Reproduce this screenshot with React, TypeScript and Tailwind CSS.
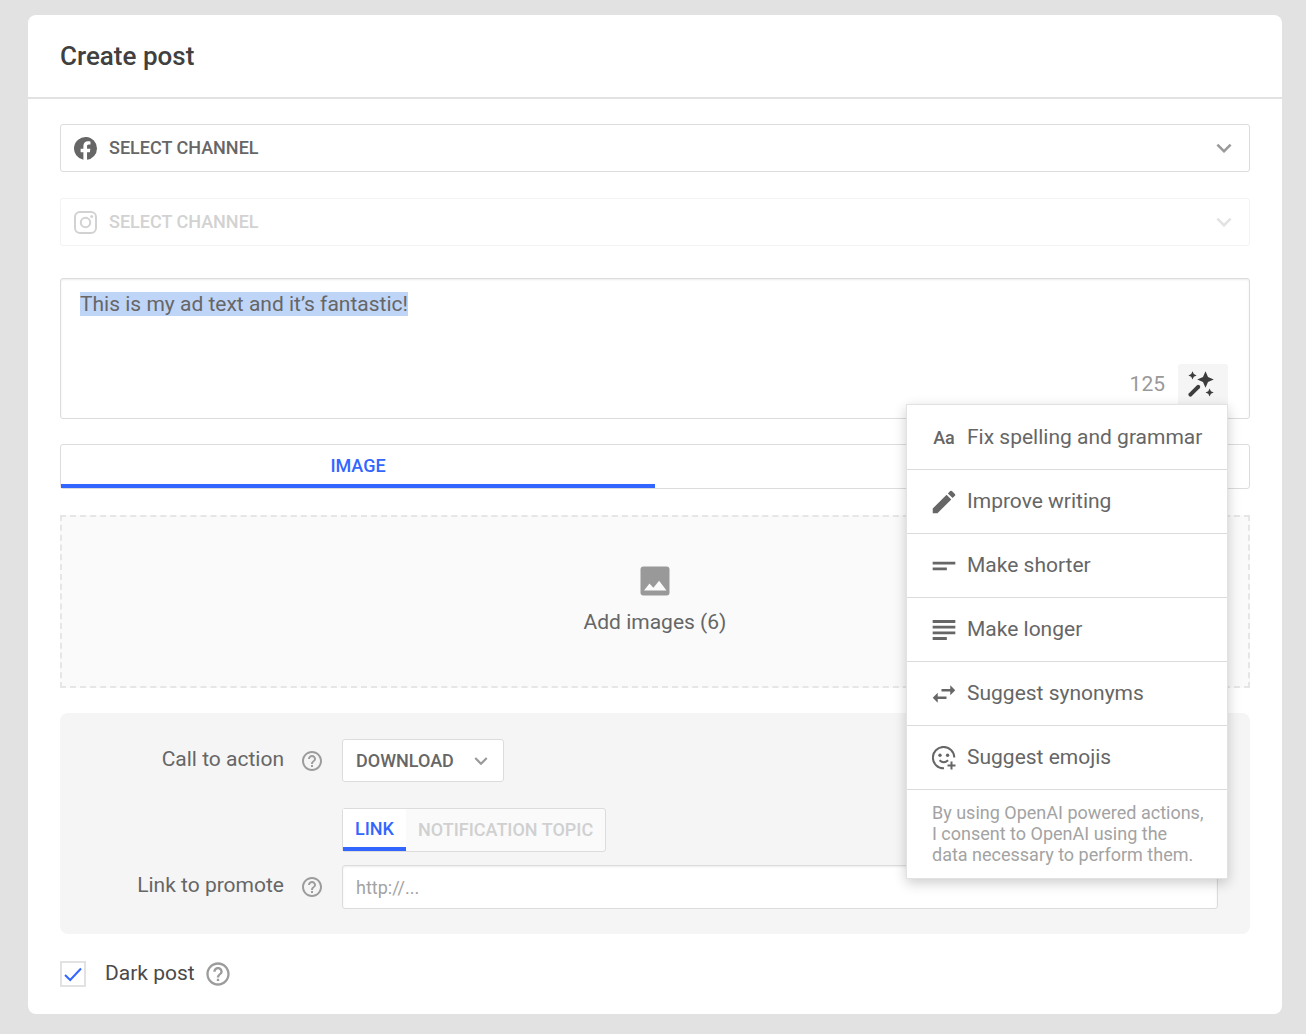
import { useEffect, useRef, useState, type ReactNode } from "react";
import {
  MdEdit,
  MdHelpOutline,
  MdKeyboardArrowDown,
  MdShortText,
  MdSubject,
  MdSwapHoriz,
} from "react-icons/md";

function FacebookIcon() {
  return (
    <svg width="23" height="23" viewBox="0 0 24 24" className="shrink-0">
      <path
        fill="#666666"
        d="M24 12a12 12 0 1 0-14.2 11.8v-8H6.9V12.200h2.900V9.500c0-3.300 1.900-5.100 4.800-5.100 1.100 0 2.300.2 2.600.3v3.100h-1.700c-1.600 0-1.900.9-1.900 1.900v2.500h3.500l-.6 3.600h-2.900v8A12 12 0 0 0 24 12z"
      />
    </svg>
  );
}

function InstagramIcon() {
  return (
    <svg
      width="23"
      height="23"
      viewBox="0 0 23 23"
      fill="none"
      stroke="#d2d2d2"
      strokeWidth="2"
      className="shrink-0"
    >
      <rect x="1" y="1" width="21" height="21" rx="5" />
      <circle cx="11.500" cy="11.500" r="4.700" />
      <circle cx="17.700" cy="5.500" r="1.500" fill="#d2d2d2" stroke="none" />
    </svg>
  );
}

function WandIcon() {
  return (
    <svg width="28" height="28" viewBox="0 0 28 28" fill="#3c3c3c">
      <path d="M18.500 1.200l2.500 5.800 5.800 2.500-5.800 2.500-2.500 5.800-2.500-5.800-5.800-2.500 5.800-2.500z" />
      <path d="M5.500 1.300l1.300 2.800 2.800 1.300-2.800 1.300-1.300 2.800-1.300-2.800-2.800-1.300 2.800-1.300z" />
      <path d="M22.600 18.400l1.300 2.800 2.800 1.300-2.800 1.300-1.300 2.800-1.300-2.800-2.800-1.300 2.800-1.300z" />
      <path
        d="M3.400 24.600l7.800-7.800"
        stroke="#3c3c3c"
        strokeWidth="4"
        strokeLinecap="round"
      />
    </svg>
  );
}

function ImageIcon() {
  return (
    <svg width="30" height="30" viewBox="0 0 30 30">
      <rect x="0.500" y="0.500" width="29" height="29" rx="3" fill="#999999" />
      <path
        d="M4 24.500l5.500-7 3.900 4.200 5.700-7 7.400 9.800z"
        fill="#fafafa"
      />
    </svg>
  );
}

function EmojiIcon() {
  return (
    <svg width="24" height="24" viewBox="0 0 24 24" fill="none" stroke="#666666">
      <path
        d="M22.300 11.500A10.700 10.700 0 1 0 12 22.300"
        strokeWidth="2"
      />
      <circle cx="8" cy="9.200" r="1.700" fill="#666666" stroke="none" />
      <circle cx="15.600" cy="9.200" r="1.700" fill="#666666" stroke="none" />
      <path d="M7.500 14.300q4.300 3.800 8.600 0" strokeWidth="2" />
      <path d="M19.500 15.500v8M15.500 19.500h8" strokeWidth="2" />
    </svg>
  );
}

function HelpButton({ label, size }: { label: string; size: number }) {
  return (
    <button type="button" aria-label={label} className="shrink-0 text-[#9c9c9c]">
      <MdHelpOutline size={size} />
    </button>
  );
}

const actions: { label: string; icon: ReactNode }[] = [
  {
    label: "Fix spelling and grammar",
    icon: <span className="text-[18px] font-medium">Aa</span>,
  },
  { label: "Improve writing", icon: <MdEdit size={30} className="shrink-0" /> },
  { label: "Make shorter", icon: <MdShortText size={34} className="shrink-0" /> },
  { label: "Make longer", icon: <MdSubject size={34} className="shrink-0" /> },
  { label: "Suggest synonyms", icon: <MdSwapHoriz size={30} className="shrink-0" /> },
  { label: "Suggest emojis", icon: <EmojiIcon /> },
];

export default function App() {
  const textRef = useRef<HTMLTextAreaElement>(null);
  const [text, setText] = useState("This is my ad text and it’s fantastic!");
  const [link, setLink] = useState("");
  const [darkPost, setDarkPost] = useState(true);
  const [menuOpen, setMenuOpen] = useState(true);

  useEffect(() => {
    textRef.current?.focus();
    textRef.current?.select();
  }, []);

  return (
    <div className="min-h-screen bg-[#e2e2e2] pt-[15px] pr-6 pb-5 pl-7 font-[Roboto,sans-serif] text-[#666666]">
      <main className="rounded-lg bg-white">
        <header className="border-b-2 border-[#e2e2e2] px-8 py-6">
          <h1 className="text-[26px] leading-[34px] font-medium text-[#404040]">
            Create post
          </h1>
        </header>

        <form className="px-8 pt-[25px] pb-[27px]">
          <div className="flex h-12 items-center rounded-[3px] border border-[#dcdcdc] px-[13px]">
            <FacebookIcon />
            <select
              aria-label="Facebook channel"
              className="ml-3 flex-1 appearance-none text-[18px] leading-6 font-medium outline-none"
            >
              <option>SELECT CHANNEL</option>
            </select>
            <MdKeyboardArrowDown size={30} className="-mr-[3px] text-[#999999]" />
          </div>

          <div className="mt-[26px] flex h-12 items-center rounded-[3px] border border-[#f3f3f3] px-[13px]">
            <InstagramIcon />
            <select
              aria-label="Instagram channel"
              disabled
              className="ml-3 flex-1 appearance-none text-[18px] leading-6 font-medium text-[#d2d2d2] opacity-100 outline-none"
            >
              <option>SELECT CHANNEL</option>
            </select>
            <MdKeyboardArrowDown size={30} className="-mr-[3px] text-[#e2e2e2]" />
          </div>

          <div className="relative mt-8">
            <textarea
              ref={textRef}
              aria-label="Post text"
              value={text}
              onChange={(e) => setText(e.target.value)}
              className="block h-[141px] w-full resize-none rounded-[3px] border border-[#dcdcdc] px-[19px] py-[13px] text-[21px] leading-6 shadow-[inset_0_1px_2px_rgba(0,0,0,0.08)] outline-none selection:bg-[#bfd5f8] selection:text-[#666666]"
            />
            <div className="absolute right-[22px] bottom-[15px] flex items-center gap-[13px]">
              <span className="pt-[2px] text-[21px] text-[#999999]">125</span>
              <button
                type="button"
                aria-label="Writing assistant"
                aria-expanded={menuOpen}
                onClick={() => setMenuOpen(!menuOpen)}
                className="flex h-10 w-[50px] items-center justify-center rounded-t-[3px] bg-[#f5f5f5] pr-1"
              >
                <WandIcon />
              </button>

              {menuOpen && (
                <div className="absolute top-full right-0 z-10 w-[322px] border border-[#e2e2e2] bg-white pt-px shadow-[0_4px_12px_rgba(0,0,0,0.2)]">
                  {actions.map((action) => (
                    <button
                      key={action.label}
                      type="button"
                      className="flex h-16 w-full items-center border-b border-[#dcdcdc] pl-[25px] text-left text-[21px]"
                    >
                      <span className="mr-[11px] flex w-6 justify-center">{action.icon}</span>
                      {action.label}
                    </button>
                  ))}
                  <p className="pt-3 pr-3 pb-[13px] pl-[25px] text-[18px] leading-[21px] text-[#a3a3a3]">
                    By using OpenAI powered actions,
                    <br />I consent to OpenAI using the
                    <br />
                    data necessary to perform them.
                  </p>
                </div>
              )}
            </div>
          </div>

          <div className="mt-[25px] flex h-[45px] rounded-[3px] border border-[#dcdcdc]">
            <button
              type="button"
              className="flex-1 border-b-4 border-[#3366ff] pt-[2px] text-[18px] leading-6 font-medium text-[#3366ff]"
            >
              IMAGE
            </button>
            <button type="button" aria-label="Video" className="flex-1" />
          </div>

          <button
            type="button"
            className="mt-[26px] flex h-[173px] w-full flex-col items-center justify-center gap-[11px] border-2 border-dashed border-[#e6e6e6] bg-[#fafafa] pt-[2px] text-[21px]"
          >
            <ImageIcon />
            Add images (6)
          </button>

          <section className="mt-[25px] grid grid-cols-[224px_24px_1fr] items-center gap-x-4 rounded-lg bg-[#f5f5f5] pt-[26px] pr-8 pb-[25px] text-[21px]">
            <label htmlFor="cta" className="pb-[2px] text-right">
              Call to action
            </label>
            <HelpButton label="About call to action" size={24} />
            <div className="ml-[2px] flex">
              <div className="flex h-[43px] w-[162px] items-center rounded-[3px] border border-[#dcdcdc] bg-white pr-[9px] pl-[13px]">
                <select
                  id="cta"
                  className="min-w-0 flex-1 appearance-none text-[18px] leading-6 font-medium outline-none"
                >
                  <option>DOWNLOAD</option>
                </select>
                <MdKeyboardArrowDown size={26} className="text-[#999999]" />
              </div>
            </div>

            <div className="col-start-3 mt-[26px] ml-[2px] flex">
              <div className="flex h-11 rounded-[3px] border border-[#dcdcdc] bg-[#fafafa] text-[18px] leading-6 font-medium">
                <button
                  type="button"
                  className="border-b-4 border-[#3366ff] bg-white px-3 pt-[2px] text-[#3366ff]"
                >
                  LINK
                </button>
                <button type="button" className="px-3 text-[#d0d0d0]">
                  NOTIFICATION TOPIC
                </button>
              </div>
            </div>

            <label htmlFor="link" className="mt-[13px] pb-[2px] text-right">
              Link to promote
            </label>
            <div className="mt-[13px] flex">
              <HelpButton label="About link to promote" size={24} />
            </div>
            <input
              id="link"
              type="text"
              value={link}
              onChange={(e) => setLink(e.target.value)}
              placeholder="http://..."
              className="mt-[13px] ml-[2px] h-11 rounded-[3px] border border-[#dcdcdc] bg-white px-[13px] text-[18px] shadow-[inset_0_1px_2px_rgba(0,0,0,0.08)] outline-none placeholder:text-[#a3a3a3]"
            />
          </section>

          <div className="mt-[27px] flex h-[26px] items-center">
            <label className="flex items-center text-[21px] text-[#4a4a4a]">
              <span className="relative mr-[19px] flex">
                <input
                  type="checkbox"
                  checked={darkPost}
                  onChange={(e) => setDarkPost(e.target.checked)}
                  className="size-[26px] appearance-none border-2 border-[#e2e2e2] bg-white"
                />
                {darkPost && (
                  <svg
                    viewBox="0 0 26 26"
                    className="pointer-events-none absolute inset-0"
                    fill="none"
                    stroke="#3366ff"
                    strokeWidth="2"
                  >
                    <path d="M5 14l5.200 5L21 7.500" />
                  </svg>
                )}
              </span>
              Dark post
            </label>
            <span className="ml-[9px] flex">
              <HelpButton label="About dark posts" size={28} />
            </span>
          </div>
        </form>
      </main>
    </div>
  );
}
